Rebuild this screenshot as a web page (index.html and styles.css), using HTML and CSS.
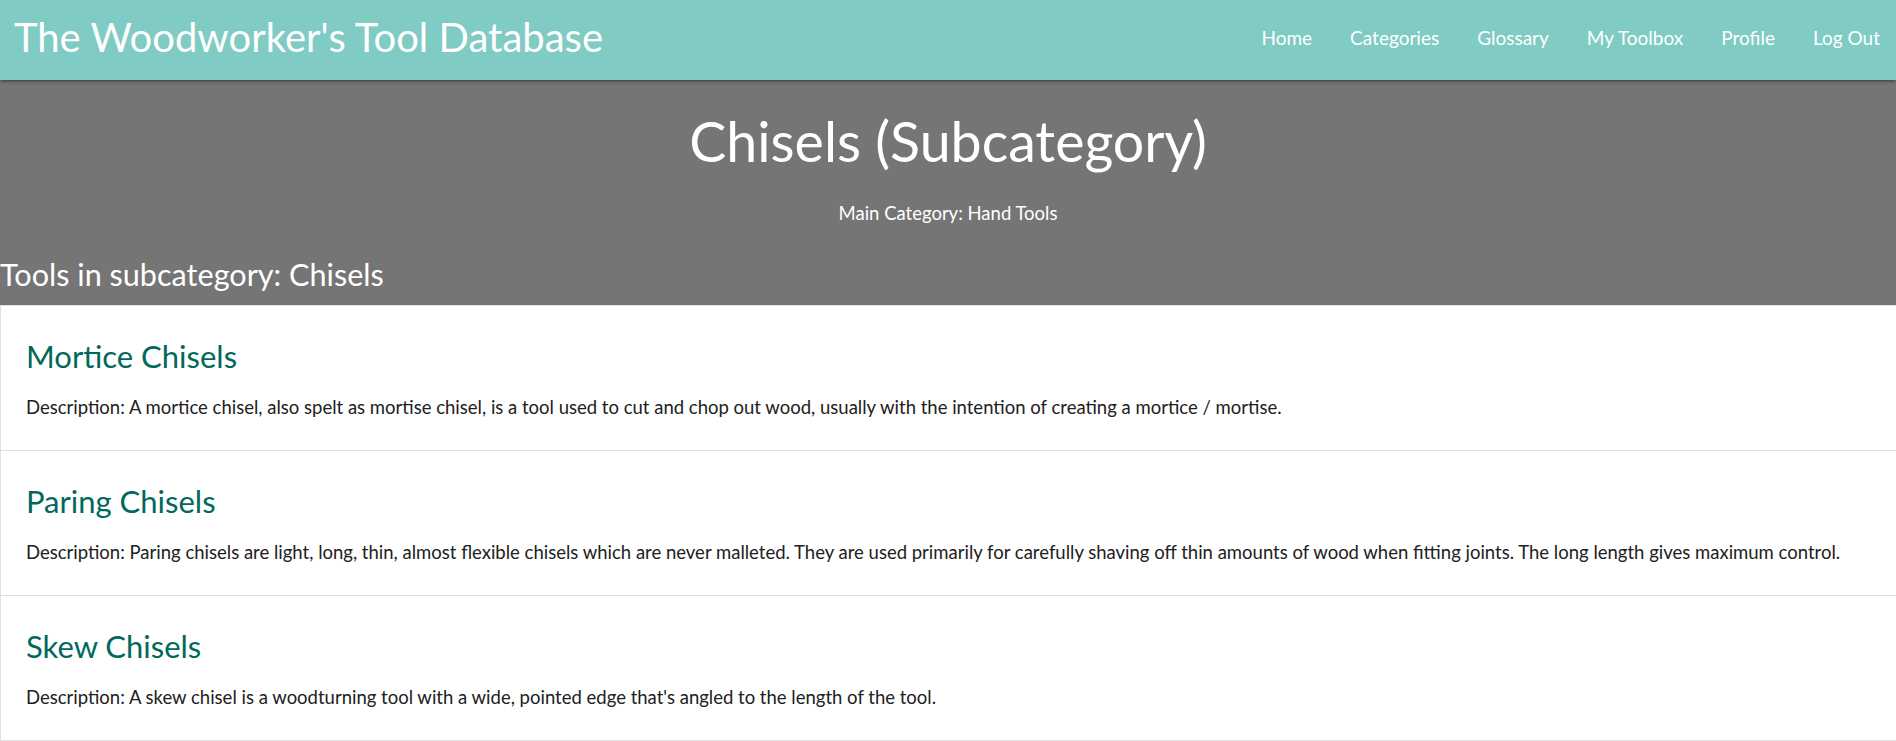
FILE: index.html
```html
<!DOCTYPE html>
<html lang="en">
<head>
<meta charset="utf-8">
<title>Chisels (Subcategory) - The Woodworker's Tool Database</title>
<link rel="stylesheet" href="styles.css">
</head>
<body>
<nav class="topbar">
  <a class="brand" href="#">The Woodworker's Tool Database</a>
  <ul class="nav-links">
    <li><a href="#">Home</a></li>
    <li><a href="#">Categories</a></li>
    <li><a href="#">Glossary</a></li>
    <li><a href="#">My Toolbox</a></li>
    <li><a href="#">Profile</a></li>
    <li><a href="#">Log Out</a></li>
  </ul>
</nav>
<section class="banner">
  <h1 class="page-title">Chisels (Subcategory)</h1>
  <p class="main-cat">Main Category: Hand Tools</p>
  <h2 class="list-heading">Tools in subcategory: Chisels</h2>
</section>
<ul class="collection">
  <li class="tool">
    <h3 class="tool-name">Mortice Chisels</h3>
    <p class="tool-desc">Description: A mortice chisel, also spelt as mortise chisel, is a tool used to cut and chop out wood, usually with the intention of creating a mortice / mortise.</p>
  </li>
  <li class="tool">
    <h3 class="tool-name">Paring Chisels</h3>
    <p class="tool-desc">Description: Paring chisels are light, long, thin, almost flexible chisels which are never malleted. They are used primarily for carefully shaving off thin amounts of wood when fitting joints. The long length gives maximum control.</p>
  </li>
  <li class="tool">
    <h3 class="tool-name">Skew Chisels</h3>
    <p class="tool-desc">Description: A skew chisel is a woodturning tool with a wide, pointed edge that's angled to the length of the tool.</p>
  </li>
</ul>
</body>
</html>
```
FILE: styles.css
```css
* { box-sizing: border-box; }
html, body {
  margin: 0;
  padding: 0;
}
body {
  font-family: Lato, "Open Sans", sans-serif;
  color: #212121;
  background: #757575;
  overflow: hidden;
}
.topbar {
  position: relative;
  z-index: 2;
  height: 80px;
  background: #80cbc4;
  display: flex;
  align-items: center;
  justify-content: space-between;
  padding: 0 16px 0 14px;
  box-shadow: 0 2px 2px 0 rgba(0,0,0,0.14), 0 3px 1px -2px rgba(0,0,0,0.12), 0 1px 5px 0 rgba(0,0,0,0.2);
}
.brand {
  color: #fff;
  text-decoration: none;
  font-family: Lato, sans-serif;
  font-size: 40px;
  line-height: 1;
  margin-bottom: 7px;
}
.nav-links {
  list-style: none;
  margin: 0 0 6px;
  padding: 0;
  display: flex;
  gap: 38px;
}
.nav-links a {
  color: #fff;
  text-decoration: none;
  font-family: Lato, sans-serif;
  font-size: 19px;
}
.banner {
  background: #757575;
  color: #fff;
  padding: 31px 0 10px;
}
.page-title {
  margin: 0;
  text-align: center;
  font-weight: 400;
  font-size: 55.5px;
  line-height: 60px;
}
.main-cat {
  margin: 30px 0 0;
  text-align: center;
  font-size: 18.5px;
  line-height: 24px;
}
.list-heading {
  margin: 30px 0 0;
  font-weight: 400;
  font-size: 30.6px;
  line-height: 40px;
}
.collection {
  list-style: none;
  margin: 0;
  padding: 0;
  background: #fff;
  border: 1px solid #e0e0e0;
  border-right: 0;
  min-height: 436px;
}
.tool {
  padding: 32px 25px 28px;
  border-bottom: 1px solid #e0e0e0;
}
.tool-name {
  margin: 0 0 17px;
  color: #00695c;
  font-weight: 400;
  font-size: 31px;
  line-height: 37px;
}
.tool-desc {
  margin: 0;
  font-size: 18.5px;
  line-height: 30px;
}
```
